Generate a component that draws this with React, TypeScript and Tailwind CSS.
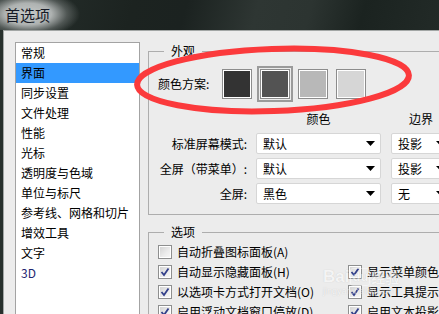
import React from "react";

const listItems = [
  "常规",
  "界面",
  "同步设置",
  "文件处理",
  "性能",
  "光标",
  "透明度与色域",
  "单位与标尺",
  "参考线、网格和切片",
  "增效工具",
  "文字",
  "3D",
];

function Arrow() {
  return (
    <svg width="9" height="5" viewBox="0 0 9 5" className="shrink-0">
      <polygon points="0,0 9,0 4.5,5" fill="#000" />
    </svg>
  );
}

function Select({ text, w }: { text: string; w: string }) {
  return (
    <div
      className={`${w} h-[21px] shrink-0 bg-white border border-[#d6d6d6] rounded-[2px] flex items-center justify-between pl-[6px] pr-[5px]`}
    >
      <span>{text}</span>
      <Arrow />
    </div>
  );
}

function Checkbox({ checked }: { checked: boolean }) {
  return (
    <div className="w-[14px] h-[14px] shrink-0 border border-[#8e8f8f] bg-white p-[1px]">
      <div className="w-full h-full bg-[linear-gradient(135deg,#d4d4d4_0%,#ececec_60%,#f6f6f6_100%)] relative">
        {checked && (
          <svg width="10" height="10" viewBox="0 0 10 10" className="absolute left-0 top-0">
            <path d="M1.5 5 L4 8 L8.5 1.5" stroke="#33408a" strokeWidth="1.8" fill="none" />
          </svg>
        )}
      </div>
    </div>
  );
}

function Swatch({ color, selected }: { color: string; selected?: boolean }) {
  return (
    <div
      className={`w-[36px] h-[36px] shrink-0 border-[2px] p-[1px] ${
        selected ? "border-[#9a9a9a]" : "border-transparent"
      }`}
    >
      <div className="w-[30px] h-[30px] border border-[#8c8c8c] bg-white p-[1px]">
        <div className="w-full h-full" style={{ backgroundColor: color }} />
      </div>
    </div>
  );
}

function CheckRow({ label, checked }: { label: string; checked: boolean }) {
  return (
    <div className="flex items-center gap-[5px] whitespace-nowrap">
      <Checkbox checked={checked} />
      <span>{label}</span>
    </div>
  );
}

export default function App() {
  return (
    <div className="w-[439px] h-[314px] overflow-hidden relative bg-[#1d2421] font-['Noto_Sans_CJK_SC',sans-serif] text-[12px] leading-[16px] text-black">
      {/* Title bar */}
      <div className="h-[30px] relative bg-[linear-gradient(105deg,#27302d_0%,#1c2320_30%,#1b2220_42%,#2e3633_58%,#2c3431_70%,#1b2320_82%,#222a27_100%)] flex items-center pl-[5px]">
        <div className="absolute inset-0 bg-[radial-gradient(ellipse_52px_24px_at_28px_14px,#c6cac9_0%,#aeb2b1_45%,rgba(110,116,114,0.6)_75%,rgba(30,36,33,0)_100%)]" />
        <span className="relative text-[15px] leading-[20px] text-[#161a26]">首选项</span>
      </div>

      {/* Window body */}
      <div className="flex h-[284px]">
        <div className="w-[3px] shrink-0 bg-[#27302c]" />
        <div className="flex-1 border-l border-t border-[#a2a6a5] bg-[#ececec] flex items-start pl-[11px] pt-[11px] overflow-hidden">
          {/* Category list */}
          <div className="w-[125px] shrink-0 border border-[#a3a3a3] bg-white h-[300px]">
            {listItems.map((item, i) => (
              <div
                key={item}
                className={`h-[20px] flex items-center pl-[5px] ${
                  i === 1 ? "bg-[#3399ff]" : ""
                } ${item === "3D" ? "text-[#1f2670]" : ""}`}
              >
                {item}
              </div>
            ))}
          </div>

          {/* Right pane */}
          <div className="ml-[8px] pt-[1px] flex flex-col shrink-0 w-[330px]">
            {/* 外观 */}
            <fieldset className="border border-[#adadad] h-[172px] shrink-0">
              <legend className="ml-[15px] px-[7px] leading-[16px]">外观</legend>
              <div className="pl-[9px] flex flex-col">
                <div className="mt-[7px] h-[36px] flex items-center">
                  <span className="w-[61px] shrink-0">颜色方案:</span>
                  <div className="flex gap-[2px]">
                    <Swatch color="#333333" />
                    <Swatch color="#535353" selected />
                    <Swatch color="#b8b8b8" />
                    <Swatch color="#d6d6d6" />
                  </div>
                </div>
                <div className="mt-[9px] h-[16px] flex">
                  <div className="w-[98px] shrink-0" />
                  <div className="w-[125px] shrink-0 text-center">颜色</div>
                  <div className="w-[60px] ml-[10px] shrink-0 text-center">边界</div>
                </div>
                <div className="mt-[6px] flex flex-col gap-[4px]">
                  {[
                    ["标准屏幕模式:", "默认", "投影"],
                    ["全屏（带菜单）:", "默认", "投影"],
                    ["全屏:", "黑色", "无"],
                  ].map(([label, c, b]) => (
                    <div key={label} className="h-[21px] flex items-center">
                      <span className="w-[89px] shrink-0 text-right whitespace-nowrap">{label}</span>
                      <div className="ml-[9px]">
                        <Select text={c} w="w-[125px]" />
                      </div>
                      <div className="ml-[10px]">
                        <Select text={b} w="w-[60px]" />
                      </div>
                    </div>
                  ))}
                </div>
              </div>
            </fieldset>

            {/* 选项 */}
            <fieldset className="border border-[#adadad] mt-[9px] h-[120px] shrink-0">
              <legend className="ml-[15px] px-[7px] leading-[16px]">选项</legend>
              <div className="pl-[9px] pt-[2px] grid grid-cols-[190px_1fr] auto-rows-[20px] items-center">
                <CheckRow label="自动折叠图标面板(A)" checked={false} />
                <div />
                <CheckRow label="自动显示隐藏面板(H)" checked />
                <CheckRow label="显示菜单颜色" checked />
                <CheckRow label="以选项卡方式打开文档(O)" checked />
                <CheckRow label="显示工具提示" checked />
                <CheckRow label="启用浮动文档窗口停放(D)" checked />
                <CheckRow label="启用文本投影" checked />
              </div>
            </fieldset>
          </div>
        </div>
      </div>

      {/* Red annotation ellipse */}
      <svg className="absolute left-0 top-0 pointer-events-none" width="439" height="314" viewBox="0 0 439 314">
        <ellipse
          cx="273"
          cy="80"
          rx="136"
          ry="31"
          transform="rotate(-2 273 80)"
          fill="none"
          stroke="#fb3a3c"
          strokeWidth="6"
        />
      </svg>

      {/* Baidu watermark */}
      <div className="absolute left-[323px] top-[268px] pointer-events-none flex flex-col items-start opacity-45">
        <div className="flex items-end gap-[1px] font-['Liberation_Sans',sans-serif] font-bold text-[17px] leading-[18px] text-white [text-shadow:0_0_1px_#9a9a9a]">
          <span>Bai</span>
          <span className="text-[13px] leading-[16px] border border-white rounded-[3px] px-[1px]">du</span>
          <span className="font-['Noto_Sans_CJK_SC',sans-serif] text-[14px] leading-[18px]">经验</span>
        </div>
        <span className="font-['Liberation_Sans',sans-serif] text-[9px] leading-[10px] text-white [text-shadow:0_0_1px_#9a9a9a]">jingyan.baidu.com</span>
      </div>
    </div>
  );
}
